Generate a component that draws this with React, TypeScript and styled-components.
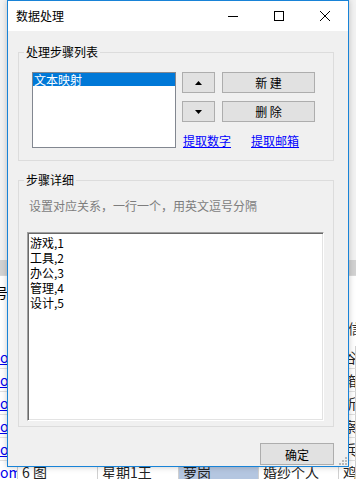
import styled, { createGlobalStyle } from 'styled-components';

const GlobalStyle = createGlobalStyle`
  html, body {
    margin: 0;
    padding: 0;
  }
  body {
    font-family: "Noto Sans CJK SC", "Noto Sans", sans-serif;
    font-size: 12px;
    color: #000;
    overflow: hidden;
  }
`;

// the app behind the dialog; only its edges and last row stay in view
const rows = [
  { left: 'om', cells: ['3 动漫', '星期2李', '天河', '旅游摄影'], right: '谷' },
  { left: 'om', cells: ['4 视频', '星期3张', '海珠', '儿童写真'], right: '箱' },
  { left: 'om', cells: ['5 音乐', '星期4陈', '越秀', '商业拍摄'], right: '析' },
  { left: 'om', cells: ['2 文档', '星期5周', '白云', '证件照片'], right: '察' },
  { left: 'om', cells: ['1 游戏', '星期6吴', '番禺', ''], right: '兵' },
  { left: 'om', cells: ['6 图', '星期1王', '萝岗', '婚纱个人'], right: '鸡', selected: 2 },
];

const mappings = ['游戏,1', '工具,2', '办公,3', '管理,4', '设计,5'];

export default function App() {
  return (
    <>
      <GlobalStyle />
      <Screen>
        <Backdrop>
          <TopPane />
          <Band />
          <HeaderArea>
            <HeaderCell>号</HeaderCell>
            <HeaderRight>信</HeaderRight>
          </HeaderArea>
          {rows.map((r, i) => (
            <TableRow key={i}>
              <LinkCell>{r.left}</LinkCell>
              {r.cells.map((c, j) => (
                <Cell key={j} $selected={r.selected === j}>{c}</Cell>
              ))}
              <Cell>{r.right}</Cell>
            </TableRow>
          ))}
        </Backdrop>

        <Window>
          <TitleBar>
            <Caption>数据处理</Caption>
            <CaptionButtons>
              <CaptionButton>
                <svg width="10" height="10" viewBox="0 0 10 10">
                  <path d="M0 5.5h10" stroke="#000" strokeWidth="1" />
                </svg>
              </CaptionButton>
              <CaptionButton>
                <svg width="10" height="10" viewBox="0 0 10 10">
                  <rect x="0.5" y="0.5" width="9" height="9" fill="none" stroke="#000" strokeWidth="1" />
                </svg>
              </CaptionButton>
              <CaptionButton>
                <svg width="10" height="10" viewBox="0 0 10 10">
                  <path d="M0 0L10 10M10 0L0 10" stroke="#000" strokeWidth="1" />
                </svg>
              </CaptionButton>
            </CaptionButtons>
          </TitleBar>

          <Client>
            <GroupBox>
              <GroupTitle>处理步骤列表</GroupTitle>
              <StepsBody>
                <ListBox>
                  <ListItem $selected>文本映射</ListItem>
                </ListBox>
                <StepControls>
                  <SmallButton>
                    <svg width="7" height="4" viewBox="0 0 7 4">
                      <path d="M3.5 0L7 4H0Z" fill="#000" />
                    </svg>
                  </SmallButton>
                  <WinButton>新 建</WinButton>
                  <SmallButton>
                    <svg width="7" height="4" viewBox="0 0 7 4">
                      <path d="M0 0H7L3.5 4Z" fill="#000" />
                    </svg>
                  </SmallButton>
                  <WinButton>删 除</WinButton>
                  <LinkRow>
                    <TextLink href="#">提取数字</TextLink>
                    <TextLink href="#">提取邮箱</TextLink>
                  </LinkRow>
                </StepControls>
              </StepsBody>
            </GroupBox>

            <DetailGroup>
              <GroupTitle>步骤详细</GroupTitle>
              <Hint>设置对应关系，一行一个，用英文逗号分隔</Hint>
              <TextArea>{mappings.join('\n')}</TextArea>
            </DetailGroup>

            <Footer>
              <OkButton>确定</OkButton>
            </Footer>
          </Client>

          <SizeGrip>
            <svg width="8" height="8" viewBox="0 0 8 8">
              <rect x="6" y="0" width="2" height="2" fill="#b8b8b8" />
              <rect x="3" y="3" width="2" height="2" fill="#b8b8b8" />
              <rect x="6" y="3" width="2" height="2" fill="#b8b8b8" />
              <rect x="0" y="6" width="2" height="2" fill="#b8b8b8" />
              <rect x="3" y="6" width="2" height="2" fill="#b8b8b8" />
              <rect x="6" y="6" width="2" height="2" fill="#b8b8b8" />
            </svg>
          </SizeGrip>
        </Window>
      </Screen>
    </>
  );
}

const Screen = styled.div`
  position: relative;
  width: 356px;
  height: 479px;
  overflow: hidden;
  background: #f3f3f3;
`;

const Backdrop = styled.div`
  display: flex;
  flex-direction: column;
  height: 100%;
`;

const TopPane = styled.div`
  height: 260px;
  flex-shrink: 0;
  background: #f2f2f2;
`;

const Band = styled.div`
  height: 15px;
  flex-shrink: 0;
  background: #d2d2d2;
`;

const HeaderArea = styled.div`
  height: 71px;
  flex-shrink: 0;
  background: #fff;
  display: flex;
  justify-content: space-between;
  align-items: flex-end;
  border-top: 1px solid #d9d9d9;
  box-sizing: border-box;
  padding-bottom: 8px;
`;

const HeaderCell = styled.span`
  font-size: 14px;
  margin-left: -6px;
  margin-bottom: 36px;
`;

const HeaderRight = styled.span`
  font-size: 14px;
  color: #333;
  margin-right: -6px;
`;

const TableRow = styled.div`
  display: grid;
  grid-template-columns: 18px 80px 81px 80px 80px 1fr;
  height: 23px;
  flex-shrink: 0;
  background: #fff;
`;

const Cell = styled.div<{ $selected?: boolean }>`
  display: flex;
  align-items: center;
  padding-left: 4px;
  font-size: 14px;
  white-space: nowrap;
  overflow: hidden;
  border-right: 1px solid #d0d0d0;
  border-bottom: 1px solid #e0e0e0;
  background: ${(p) => (p.$selected ? '#b4c6e0' : '#fff')};
  color: #222;
`;

const LinkCell = styled(Cell)`
  padding-left: 0;
  color: #0000ee;
  text-decoration: underline;
`;

const Window = styled.div`
  position: absolute;
  left: 7px;
  top: 0;
  width: 342px;
  box-sizing: border-box;
  border: 1px solid #1883d7;
  background: #f0f0f0;
  display: flex;
  flex-direction: column;
  box-shadow: 0 0 6px rgba(0, 0, 0, 0.22);
`;

const TitleBar = styled.div`
  height: 30px;
  background: #fff;
  display: flex;
  align-items: center;
  justify-content: space-between;
`;

const Caption = styled.span`
  padding-left: 8px;
  font-size: 12px;
  line-height: 16px;
`;

const CaptionButtons = styled.div`
  display: flex;
  height: 100%;
`;

const CaptionButton = styled.div`
  width: 46px;
  height: 100%;
  display: flex;
  align-items: center;
  justify-content: center;
`;

const Client = styled.div`
  display: flex;
  flex-direction: column;
  padding: 21px 14px 1px 10px;
`;

const GroupBox = styled.div`
  border: 1px solid #dcdcdc;
  display: flex;
  flex-direction: column;
  align-items: flex-start;
`;

const GroupTitle = styled.span`
  display: inline-block;
  margin: -9px 0 0 5px;
  padding: 0 2px;
  line-height: 16px;
  font-size: 12px;
  background: #f0f0f0;
`;

const StepsBody = styled.div`
  display: flex;
  gap: 6px;
  margin-top: 12px;
  padding: 0 0 9px 13px;
  align-items: flex-start;
`;

const ListBox = styled.div`
  width: 144px;
  height: 76px;
  box-sizing: border-box;
  border: 1px solid #828790;
  background: #fff;
`;

const ListItem = styled.div<{ $selected?: boolean }>`
  height: 13px;
  line-height: 13px;
  padding-left: 1px;
  font-size: 12px;
  color: ${(p) => (p.$selected ? '#fff' : '#000')};
  background: ${(p) => (p.$selected ? '#0078d7' : 'transparent')};
`;

const StepControls = styled.div`
  display: grid;
  grid-template-columns: 33px 93px;
  grid-auto-rows: 21px;
  column-gap: 7px;
  row-gap: 8px;
`;

const WinButton = styled.div`
  box-sizing: border-box;
  border: 1px solid #adadad;
  background: #e1e1e1;
  display: flex;
  align-items: center;
  justify-content: center;
  font-size: 12px;
  white-space: pre;
`;

const SmallButton = styled(WinButton)``;

const LinkRow = styled.div`
  grid-column: 1 / span 2;
  display: flex;
  gap: 20px;
  padding-left: 1px;
  margin-top: 4px;
  line-height: 14px;
  height: 14px;
`;

const TextLink = styled.a`
  color: #0000ff;
  text-decoration: underline;
  font-size: 12px;
`;

const DetailGroup = styled(GroupBox)`
  margin-top: 19px;
  align-items: stretch;
  padding-bottom: 5px;

  & > ${GroupTitle} {
    align-self: flex-start;
  }
`;

const Hint = styled.div`
  margin-top: 10px;
  padding-left: 10px;
  line-height: 16px;
  color: #7d7d7d;
  font-size: 12px;
`;

const TextArea = styled.div`
  margin: 18px 9px 0 8px;
  height: 189px;
  box-sizing: border-box;
  background: #fff;
  border-top: 1px solid #a0a0a0;
  border-left: 1px solid #a0a0a0;
  border-right: 1px solid #fff;
  border-bottom: 1px solid #fff;
  box-shadow: inset 1px 1px 0 #696969, inset -1px -1px 0 #e3e3e3;
  padding: 2px 2px 0 2px;
  white-space: pre;
  line-height: 15px;
  font-size: 12px;
`;

const Footer = styled.div`
  display: flex;
  justify-content: flex-end;
  margin-top: 16px;
`;

const OkButton = styled(WinButton)`
  width: 74px;
  height: 22px;
`;

const SizeGrip = styled.div`
  position: absolute;
  right: 1px;
  bottom: 1px;
  width: 8px;
  height: 8px;
  display: flex;
`;
